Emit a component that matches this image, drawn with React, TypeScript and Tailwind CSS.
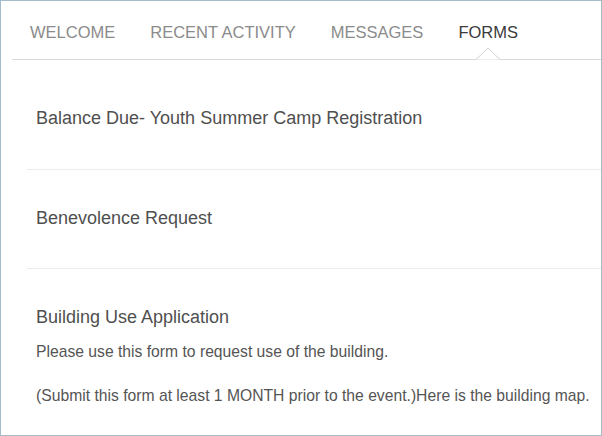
import React from 'react';

const tabs = ['WELCOME', 'RECENT ACTIVITY', 'MESSAGES', 'FORMS'];
const activeTab = 'FORMS';

const TabBar = () => (
  <div className="ml-[11px] flex h-[59px] border-b border-[#dadada] pl-[18px]">
    {tabs.map((tab) => {
      const active = tab === activeTab;
      return (
        <div
          key={tab}
          className={`relative mr-[35px] flex items-center pt-[5px] text-[16.5px] ${
            active ? 'text-[#3a3a3a]' : 'text-[#8b8b8b]'
          }`}
        >
          {tab}
          {active && (
            <svg
              className="absolute bottom-[-1px] left-1/2 -translate-x-1/2"
              width="24"
              height="13"
              viewBox="0 0 24 13"
            >
              <polygon points="0,12.5 12,1 24,12.5" fill="#ffffff" />
              <polyline points="0,12.5 12,1 24,12.5" fill="none" stroke="#d2d2d2" strokeWidth="1" />
            </svg>
          )}
        </div>
      );
    })}
  </div>
);

type Form = { title: string; body?: string[] };

const forms: Form[] = [
  { title: 'Balance Due- Youth Summer Camp Registration' },
  { title: 'Benevolence Request' },
  {
    title: 'Building Use Application',
    body: [
      'Please use this form to request use of the building.',
      '(Submit this form at least 1 MONTH prior to the event.)Here is the building map.',
    ],
  },
];

export default function App() {
  return (
    <div
      className="h-[436px] w-[602px] overflow-hidden border border-[#a4bdca] bg-white"
      style={{ fontFamily: '"Liberation Sans", Arial, sans-serif' }}
    >
      <TabBar />
      <div className="ml-[26px] mt-[10px]">
        {forms.map((form, i) => (
          <div
            key={form.title}
            className={`pl-[9px] pt-[37px] ${i === 0 ? 'pb-[40px]' : 'pb-[39px] border-t border-[#ececec]'}`}
          >
            <div className="text-[18px] leading-[22px] text-[#4f4f4f]">{form.title}</div>
            {form.body && (
              <div className="mt-[13px] text-[15.7px] leading-[22px] text-[#555555]">
                {form.body.map((line, j) => (
                  <p key={j} className={j > 0 ? 'mt-[22px]' : ''}>
                    {line}
                  </p>
                ))}
              </div>
            )}
          </div>
        ))}
      </div>
    </div>
  );
}
